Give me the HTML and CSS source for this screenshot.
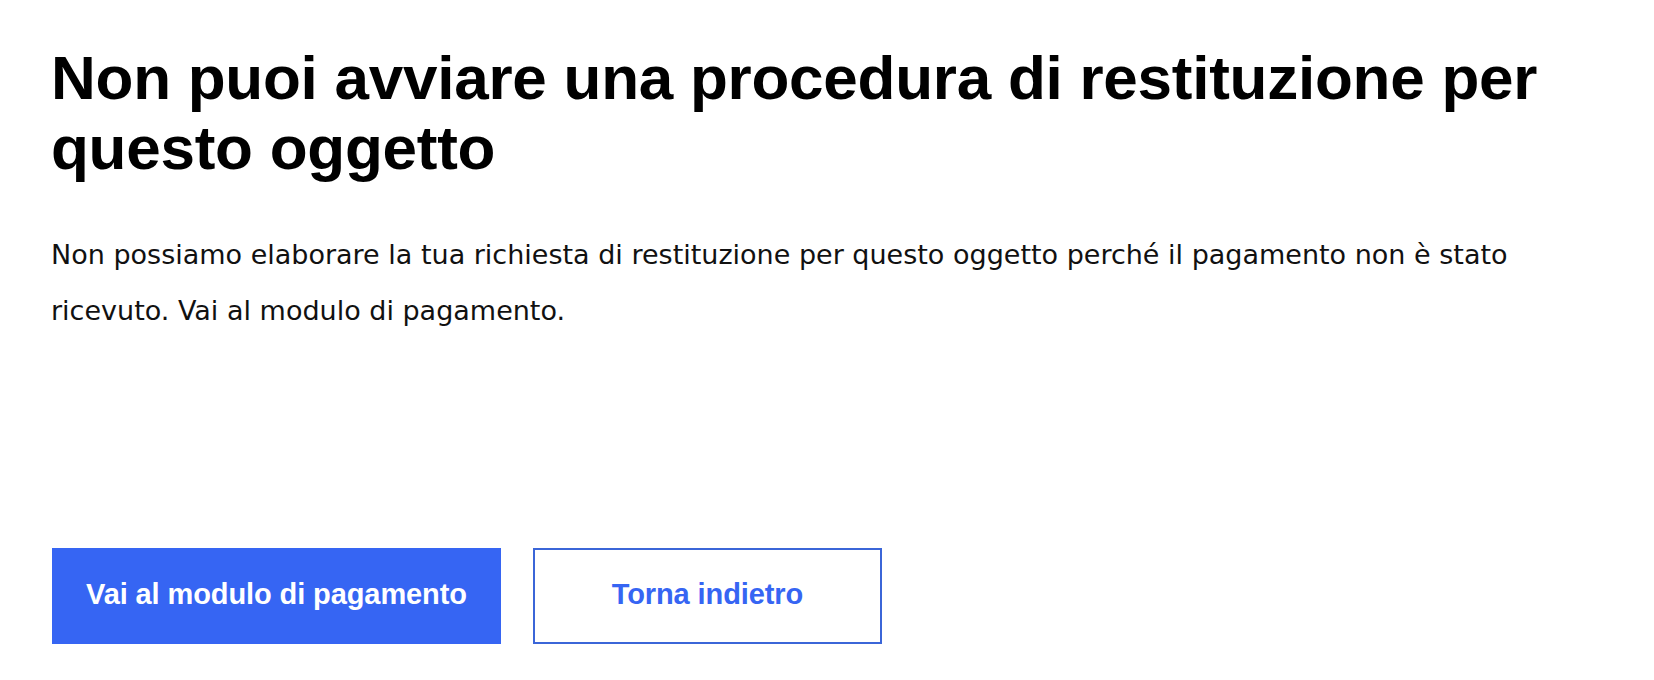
FILE: index.html
```html
<!DOCTYPE html>
<html lang="it">
<head>
  <meta charset="UTF-8">
  <meta name="viewport" content="width=device-width, initial-scale=1.0">
  <title>Restituzione non disponibile</title>
  <link rel="stylesheet" href="styles.css">
</head>
<body>
  <div class="page">
    <h1 class="title">Non puoi avviare una procedura di restituzione per questo oggetto</h1>
    <p class="message">Non possiamo elaborare la tua richiesta di restituzione per questo oggetto perché il pagamento non è stato ricevuto. Vai al modulo di pagamento.</p>

    <div class="actions">
      <a class="btn btn-primary" href="#">Vai al modulo di pagamento</a>
      <a class="btn btn-secondary" href="#">Torna indietro</a>
    </div>
  </div>
</body>
</html>
```

FILE: styles.css
```css
*{
  margin: 0;
  padding: 0;
  box-sizing: border-box;
}
body {
  background: #fff;
  color: #111;
  font-family: "Liberation Sans", Arial, sans-serif;
}
.page {
  padding: 43px 51px 0;
}
.title {
  font-size: 62px;
  line-height: 70px;
  font-weight: 700;
  letter-spacing: -0.25px;
  color: #000;
}
.message {
  margin-top: 44px;
  font-family: "DejaVu Sans", "Liberation Sans", sans-serif;
  font-size: 27px;
  line-height: 56px;
}
/* bottoni */
.actions {
  display: flex;
  gap: 32px;
  margin-top: 209px;
  margin-left: 1px;
}
.btn {
  display: flex;
  align-items: center;
  justify-content: center;
  height: 96px;
  padding-bottom: 4px;
  font-size: 29px;
  font-weight: 700;
  letter-spacing: -0.1px;
  text-decoration: none;
  box-shadow: 0 4px 0 #e5e5e5;
}
.btn-primary {
  padding-left: 34px;
  padding-right: 34px;
  background: #3665f3;
  color: #fff;
}
.btn-secondary {
  width: 349px;
  border: 2px solid #3b66d8;
  background: #fff;
  color: #3665f3;
}
```
